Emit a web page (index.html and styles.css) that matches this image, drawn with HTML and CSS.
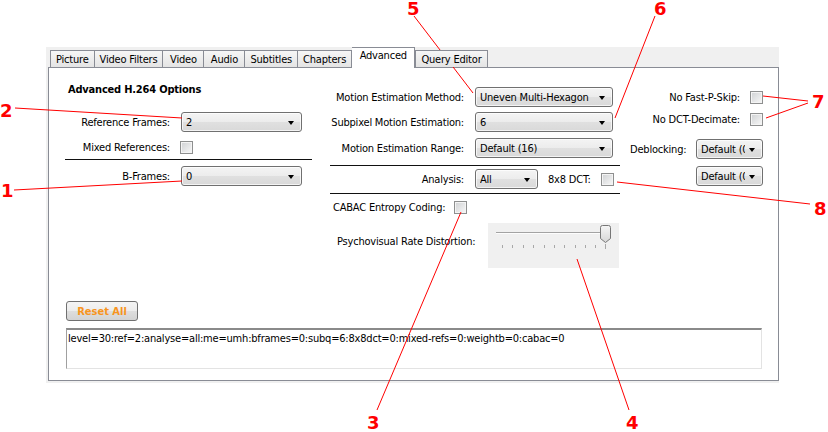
FILE: index.html
```html
<!DOCTYPE html>
<html lang="en">
<head>
    <meta charset="UTF-8">
    <title>Advanced</title>
    <link rel="stylesheet" href="styles.css">
</head>
<body>
<div class="window">
    <div class="tabs">
        <span class="tab">Picture</span>
        <span class="tab">Video Filters</span>
        <span class="tab">Video</span>
        <span class="tab">Audio</span>
        <span class="tab">Subtitles</span>
        <span class="tab">Chapters</span>
        <span class="tab active">Advanced</span>
        <span class="tab">Query Editor</span>
    </div>
    <div class="page">
        <div class="cols">
            <div class="col left">
                <div class="title">Advanced H.264 Options</div>
                <div class="row r-ref">
                    <span class="lbl">Reference Frames:</span>
                    <div class="combo"><span class="val">2</span><span class="arrow"></span></div>
                </div>
                <div class="row r-mixed">
                    <span class="lbl">Mixed References:</span>
                    <span class="check"></span>
                </div>
                <div class="sep s-left"></div>
                <div class="row r-bf">
                    <span class="lbl">B-Frames:</span>
                    <div class="combo"><span class="val">0</span><span class="arrow"></span></div>
                </div>
            </div>

            <div class="col mid">
                <div class="row">
                    <span class="lbl">Motion Estimation Method:</span>
                    <div class="combo"><span class="val">Uneven Multi-Hexagon</span><span class="arrow"></span></div>
                </div>
                <div class="row r-sub">
                    <span class="lbl">Subpixel Motion Estimation:</span>
                    <div class="combo"><span class="val">6</span><span class="arrow"></span></div>
                </div>
                <div class="row r-range">
                    <span class="lbl">Motion Estimation Range:</span>
                    <div class="combo"><span class="val">Default (16)</span><span class="arrow"></span></div>
                </div>
                <div class="sep s-mid1"></div>
                <div class="row r-an">
                    <span class="lbl">Analysis:</span>
                    <div class="combo small"><span class="val">All</span><span class="arrow"></span></div>
                    <span class="dct">8x8 DCT:</span>
                    <span class="check"></span>
                </div>
                <div class="sep s-mid2"></div>
                <div class="row r-cabac">
                    <span>CABAC Entropy Coding:</span>
                    <span class="check"></span>
                </div>
                <div class="row r-psy">
                    <span class="psy-lbl">Psychovisual Rate Distortion:</span>
                    <div class="slider">
                        <svg width="131" height="45" viewBox="0 0 131 45">
                            <line x1="8" y1="9.5" x2="121" y2="9.5" stroke="#a3a3a3"/>
                            <line x1="8" y1="10.5" x2="121" y2="10.5" stroke="#fdfdfd"/>
                            <g stroke="#a8a8a8">
                                <line x1="14.5" y1="22" x2="14.5" y2="25"/>
                                <line x1="24.5" y1="22" x2="24.5" y2="25"/>
                                <line x1="35.5" y1="22" x2="35.5" y2="25"/>
                                <line x1="45.5" y1="22" x2="45.5" y2="25"/>
                                <line x1="56.5" y1="22" x2="56.5" y2="25"/>
                                <line x1="66.5" y1="22" x2="66.5" y2="25"/>
                                <line x1="76.5" y1="22" x2="76.5" y2="25"/>
                                <line x1="87.5" y1="22" x2="87.5" y2="25"/>
                                <line x1="97.5" y1="22" x2="97.5" y2="25"/>
                                <line x1="107.5" y1="22" x2="107.5" y2="25"/>
                                <line x1="117.5" y1="21" x2="117.5" y2="26"/>
                            </g>
                            <defs>
                                <linearGradient id="thumb" x1="0" y1="0" x2="0" y2="1">
                                    <stop offset="0" stop-color="#f6f6f6"/>
                                    <stop offset="1" stop-color="#d6d6d6"/>
                                </linearGradient>
                            </defs>
                            <path d="M112.5 4.5 q0 -2 2 -2 h6 q2 0 2 2 v11 l-5 4 l-5 -4 z" fill="url(#thumb)" stroke="#777"/>
                        </svg>
                    </div>
                </div>
            </div>

            <div class="col right">
                <div class="row end">
                    <span class="rlbl">No Fast-P-Skip:</span>
                    <span class="check"></span>
                </div>
                <div class="row end r-dct">
                    <span class="rlbl">No DCT-Decimate:</span>
                    <span class="check"></span>
                </div>
                <div class="row r-deb">
                    <span class="deb-lbl">Deblocking:</span>
                    <div class="combo tiny"><span class="val">Default (0, 0)</span><span class="arrow"></span></div>
                </div>
                <div class="row end r-deb2">
                    <div class="combo tiny"><span class="val">Default (0, 0)</span><span class="arrow"></span></div>
                </div>
            </div>
        </div>

        <button class="reset">Reset All</button>
        <div class="query">level=30:ref=2:analyse=all:me=umh:bframes=0:subq=6:8x8dct=0:mixed-refs=0:weightb=0:cabac=0</div>
    </div>
</div>

<svg class="marks" width="828" height="432" viewBox="0 0 828 432">
    <g stroke="#ff0000" stroke-width="1">
        <line x1="14" y1="190" x2="182" y2="181"/>
        <line x1="15" y1="108" x2="182" y2="118"/>
        <line x1="377" y1="410" x2="461" y2="212"/>
        <line x1="629" y1="410" x2="577" y2="259"/>
        <line x1="414" y1="16" x2="473" y2="93"/>
        <line x1="655" y1="16" x2="615" y2="118"/>
        <line x1="763" y1="96" x2="808" y2="101"/>
        <line x1="766" y1="118" x2="808" y2="103"/>
        <line x1="617" y1="182" x2="810" y2="204"/>
    </g>
    <g class="num">
        <text x="1" y="197">1</text>
        <text x="0" y="117">2</text>
        <text x="367" y="429">3</text>
        <text x="626" y="429">4</text>
        <text x="407" y="15">5</text>
        <text x="654" y="15">6</text>
        <text x="812" y="108">7</text>
        <text x="814" y="215">8</text>
    </g>
</svg>
</body>
</html>
```

FILE: styles.css
```css
* {
    box-sizing: border-box;
    margin: 0;
    padding: 0;
}

body {
    position: relative;
    width: 828px;
    height: 432px;
    overflow: hidden;
    background: #fff;
    color: #000;
    font: 11px "DejaVu Sans Condensed", "DejaVu Sans", sans-serif;
    letter-spacing: -0.2px;
}

.window {
    margin: 47px 0 0 46px;
    padding: 3px 0 0 2px;
    width: 733px;
    height: 336px;
    background: #f0f0f0;
}

/* tab strip */
.tabs {
    position: relative;
    z-index: 1;
    display: flex;
    align-items: flex-start;
    height: 17px;
    margin-left: 2px;
}

.tab {
    min-width: 41px;
    height: 17px;
    padding: 2px 5px 0;
    line-height: 14px;
    text-align: center;
    white-space: nowrap;
    border: 1px solid #898c95;
    border-bottom: none;
    background: linear-gradient(#f6f6f6, #e4e4e4);
}

.tab + .tab {
    border-left: none;
}

.tab.active {
    height: 21px;
    margin: -3px 0 0;
    padding: 1px 7.5px 0;
    background: #fff;
}

.tab.active + .tab {
    border-left: 1px solid #898c95;
}

/* page */
.page {
    width: 731px;
    height: 314px;
    border: 1px solid #898c95;
    background: #fff;
}

.cols {
    display: flex;
    height: 233px;
}

.col {
    display: flex;
    flex-direction: column;
}

.left {
    width: 247px;
    margin-left: 16px;
    padding-top: 15px;
}

.mid {
    width: 290px;
    margin-left: 18px;
    padding-top: 19px;
}

.right {
    width: 133px;
    margin-left: 10px;
    padding-top: 23px;
}

.title {
    padding-left: 3px;
    line-height: 14px;
    font-weight: bold;
}

.row {
    display: flex;
    align-items: center;
    white-space: nowrap;
}

.row.end {
    justify-content: flex-end;
}

.lbl {
    margin-right: 11px;
    text-align: right;
}

.left .lbl {
    width: 105px;
}

.mid .lbl {
    width: 134px;
}

.sep {
    height: 1px;
    background: #111;
}

.r-ref { margin-top: 15px; }
.r-mixed { margin-top: 9px; }
.s-left { margin-top: 5px; }
.r-bf { margin-top: 6px; }

.r-sub { margin-top: 5px; }
.r-range { margin-top: 6px; }
.s-mid1 { margin-top: 7px; }
.r-an { margin-top: 3px; }
.s-mid2 { margin-top: 4px; }
.r-cabac { margin-top: 7px; padding-left: 3px; }
.r-psy { margin-top: 9px; align-items: flex-start; }

.r-dct { margin-top: 9px; }
.r-deb { margin-top: 13px; }
.r-deb2 { margin-top: 7px; }

/* combo box */
.combo {
    display: flex;
    align-items: center;
    height: 20px;
    padding-left: 4px;
    border: 1px solid #707070;
    border-radius: 3px;
    background: linear-gradient(#f4f4f4, #ececec 50%, #e0e0e0 50%, #d9d9d9);
    box-shadow: inset 0 0 0 1px rgba(255, 255, 255, .7);
    overflow: hidden;
}

.left .combo {
    width: 121px;
}

.mid .combo {
    width: 138px;
}

.mid .combo.small {
    width: 63px;
}

.combo.tiny {
    width: 67px;
}

.combo .val {
    flex: 1;
    overflow: hidden;
}

.arrow {
    flex: none;
    width: 0;
    height: 0;
    margin: 1px 7px 0 4px;
    border-top: 4px solid #000;
    border-left: 3.5px solid transparent;
    border-right: 3.5px solid transparent;
}

/* check box */
.check {
    flex: none;
    width: 13px;
    height: 13px;
    border: 1px solid #8e8f8f;
    background: linear-gradient(135deg, #cfd1d3, #f8f8f8);
    box-shadow: inset 0 0 0 1px #f4f4f4;
}

.r-mixed .check {
    margin-left: -1px;
}

.dct {
    margin: 0 10px 0 10px;
}

.r-cabac .check {
    margin-left: 9px;
}

.psy-lbl {
    width: 146px;
    margin-top: 12px;
    padding-left: 7px;
    line-height: 14px;
}

.slider {
    width: 131px;
    height: 45px;
    margin-left: 12px;
    background: #f0f0f0;
}

.slider svg {
    display: block;
}

.rlbl {
    margin-right: 10px;
}

.deb-lbl {
    flex: 1;
}

.r-deb2 .combo {
    margin-left: auto;
}

/* bottom */
.reset {
    display: block;
    width: 72px;
    height: 20px;
    margin-left: 17px;
    border: 1px solid #707070;
    border-radius: 3px;
    background: linear-gradient(#f4f4f4, #ececec 50%, #dedede 50%, #d3d3d3);
    color: #f7941e;
    font: bold 11px "DejaVu Sans Condensed", "DejaVu Sans", sans-serif;
    letter-spacing: 0;
}

.query {
    width: 696px;
    height: 41px;
    margin: 7px 0 0 17px;
    padding: 2px 0 0 1px;
    line-height: 14px;
    border-top: 2px solid #8a8a8a;
    border-left: 1px solid #a0a0a0;
    border-right: 1px solid #e3e3e3;
    border-bottom: 1px solid #e3e3e3;
    white-space: nowrap;
}

/* red call-outs drawn over the screenshot */
.marks {
    position: absolute;
    top: 0;
    left: 0;
    pointer-events: none;
}

.num text {
    fill: #ff0000;
    font: bold 18px "DejaVu Sans", sans-serif;
    letter-spacing: 0;
}
```
